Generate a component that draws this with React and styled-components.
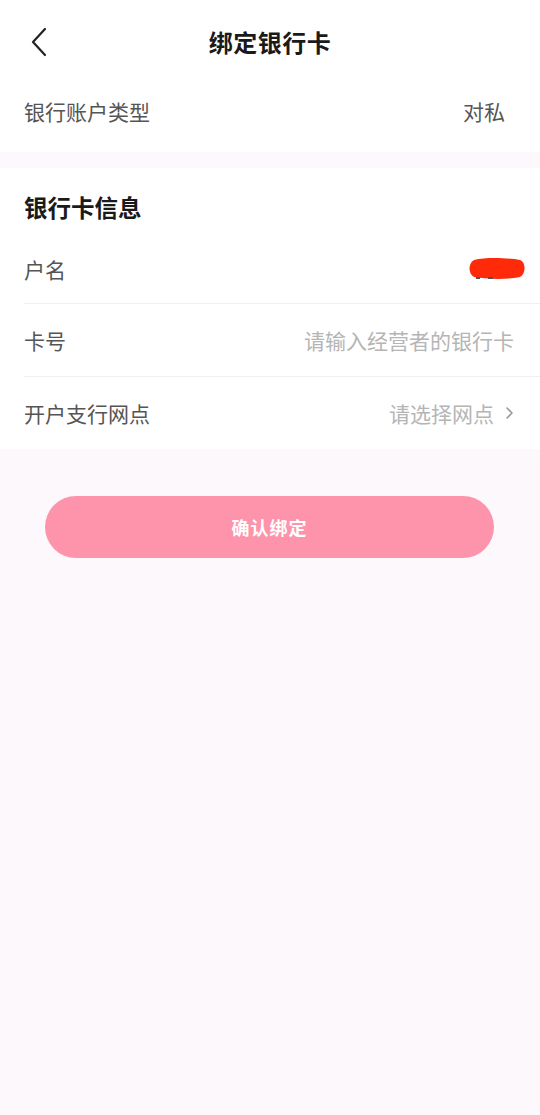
import React from "react";
import styled, {createGlobalStyle} from "styled-components";

const Global = createGlobalStyle`
    html, body {
        margin: 0;
        padding: 0;
        background: #fdf8fb;
        font-family: "Noto Sans CJK SC", "Noto Sans", sans-serif;
    }
`;

const Page = styled.div`
    width: 540px;
    min-height: 1115px;
    background: #fdf8fb;
`;

const Header = styled.div`
    position: relative;
    height: 82px;
    display: flex;
    align-items: center;
    justify-content: center;
    background: #fff;

    .back {
        position: absolute;
        left: 30px;
        top: 27px;
    }

    h1 {
        margin: 0;
        font-size: 24px;
        font-weight: 700;
        color: #1a1a1a;
        letter-spacing: 0.5px;
    }
`;

const Section = styled.div`
    background: #fff;
    padding-left: 24px;
    padding-bottom: ${p => p.$pb || 0}px;
    margin-bottom: ${p => p.$gap || 0}px;
`;

const SectionTitle = styled.div`
    padding-top: 19px;
    height: 48px;
    font-size: 23.5px;
    font-weight: 700;
    color: #1a1a1a;
    line-height: 40px;
`;

const Row = styled.div`
    display: flex;
    align-items: center;
    justify-content: space-between;
    height: ${p => p.$h || 70}px;
    padding-right: ${p => p.$pr || 26}px;
    border-bottom: ${p => p.$line ? "1px solid #f1eef0" : "none"};
    font-size: 21px;
`;

const Label = styled.span`
    color: #555;
`;

const Value = styled.span`
    color: ${p => p.$muted ? "#b5b5b5" : "#555"};
    display: flex;
    align-items: center;
    gap: 10px;
`;

const Redact = styled.svg`
    display: block;
`;

const Button = styled.button`
    display: block;
    margin: 47px 46px 0 45px;
    width: 449px;
    height: 62px;
    border: none;
    border-radius: 31px;
    background: #fe94ac;
    color: #fff;
    font-family: inherit;
    font-size: 18px;
    font-weight: 700;
    letter-spacing: 1px;
`;

export default function App() {
    return (
        <Page>
            <Global/>
            <Header>
                <svg className="back" width="20" height="30" viewBox="0 0 20 30">
                    <path d="M15 2 L3 15 L15 28" fill="none" stroke="#222" strokeWidth="2.2" strokeLinecap="round" strokeLinejoin="round"/>
                </svg>
                <h1>绑定银行卡</h1>
            </Header>

            <Section $gap={16} $pb={12}>
                <Row $h={58} $pr={35}>
                    <Label>银行账户类型</Label>
                    <Value>对私</Value>
                </Row>
            </Section>

            <Section>
                <SectionTitle>银行卡信息</SectionTitle>
                <Row $h={68} $pr={14} $line>
                    <Label>户名</Label>
                    <Redact width="58" height="26" viewBox="0 0 58 26">
                        <path d="M6 4 C18 1 40 2 52 4 C58 6 58 18 52 21 C38 24 18 23 6 21 C0 18 0 7 6 4 Z" fill="#fe2a0a"/>
                        <rect x="8" y="21" width="4" height="2" fill="#555"/>
                        <rect x="20" y="21" width="5" height="2" fill="#555"/>
                    </Redact>
                </Row>
                <Row $h={72} $line>
                    <Label>卡号</Label>
                    <Value $muted>请输入经营者的银行卡</Value>
                </Row>
                <Row $h={72}>
                    <Label>开户支行网点</Label>
                    <Value $muted>
                        请选择网点
                        <svg width="10" height="16" viewBox="0 0 10 16">
                            <path d="M3 3 L8 8 L3 13" fill="none" stroke="#999" strokeWidth="1.6" strokeLinecap="round" strokeLinejoin="round"/>
                        </svg>
                    </Value>
                </Row>
            </Section>

            <Button>确认绑定</Button>
        </Page>
    );
};
